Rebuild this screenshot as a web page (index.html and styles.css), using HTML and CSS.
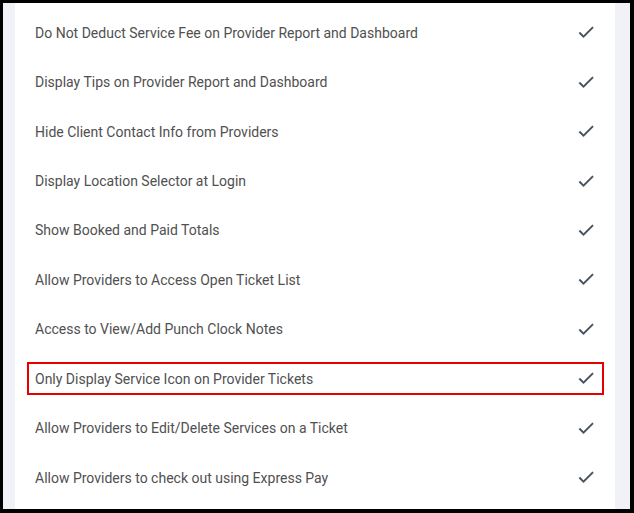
FILE: index.html
```html
<!DOCTYPE html>
<html lang="en">
<head>
    <meta charset="UTF-8">
    <meta name="viewport" content="width=device-width, initial-scale=1.0">
    <title>Provider Settings</title>
    <link rel="stylesheet" href="styles.css">
</head>
<body>
    <div class="frame">
        <div class="page">
            <ul class="settings">
                <li class="row"><div class="row-body"><span>Do Not Deduct Service Fee on Provider Report and Dashboard</span><svg class="check" viewBox="0 0 24 24"><path d="M9 16.17L4.83 12l-1.42 1.41L9 19 21 7l-1.41-1.41z"/></svg></div></li>
                <li class="row"><div class="row-body"><span>Display Tips on Provider Report and Dashboard</span><svg class="check" viewBox="0 0 24 24"><path d="M9 16.17L4.83 12l-1.42 1.41L9 19 21 7l-1.41-1.41z"/></svg></div></li>
                <li class="row"><div class="row-body"><span>Hide Client Contact Info from Providers</span><svg class="check" viewBox="0 0 24 24"><path d="M9 16.17L4.83 12l-1.42 1.41L9 19 21 7l-1.41-1.41z"/></svg></div></li>
                <li class="row"><div class="row-body"><span>Display Location Selector at Login</span><svg class="check" viewBox="0 0 24 24"><path d="M9 16.17L4.83 12l-1.42 1.41L9 19 21 7l-1.41-1.41z"/></svg></div></li>
                <li class="row"><div class="row-body"><span>Show Booked and Paid Totals</span><svg class="check" viewBox="0 0 24 24"><path d="M9 16.17L4.83 12l-1.42 1.41L9 19 21 7l-1.41-1.41z"/></svg></div></li>
                <li class="row"><div class="row-body"><span>Allow Providers to Access Open Ticket List</span><svg class="check" viewBox="0 0 24 24"><path d="M9 16.17L4.83 12l-1.42 1.41L9 19 21 7l-1.41-1.41z"/></svg></div></li>
                <li class="row"><div class="row-body"><span>Access to View/Add Punch Clock Notes</span><svg class="check" viewBox="0 0 24 24"><path d="M9 16.17L4.83 12l-1.42 1.41L9 19 21 7l-1.41-1.41z"/></svg></div></li>
                <li class="row marked"><div class="row-body"><span>Only Display Service Icon on Provider Tickets</span><svg class="check" viewBox="0 0 24 24"><path d="M9 16.17L4.83 12l-1.42 1.41L9 19 21 7l-1.41-1.41z"/></svg></div></li>
                <li class="row"><div class="row-body"><span>Allow Providers to Edit/Delete Services on a Ticket</span><svg class="check" viewBox="0 0 24 24"><path d="M9 16.17L4.83 12l-1.42 1.41L9 19 21 7l-1.41-1.41z"/></svg></div></li>
                <li class="row"><div class="row-body"><span>Allow Providers to check out using Express Pay</span><svg class="check" viewBox="0 0 24 24"><path d="M9 16.17L4.83 12l-1.42 1.41L9 19 21 7l-1.41-1.41z"/></svg></div></li>
            </ul>
        </div>
    </div>
</body>
</html>
```

FILE: styles.css
```css
* {
    margin: 0;
    padding: 0;
    box-sizing: border-box;
}

html, body {
    height: 100%;
}

body {
    background: #000;
    font-family: 'Roboto', 'Liberation Sans', sans-serif;
    overflow: hidden;
}

.frame {
    height: 100%;
    padding: 3px 4px 4px 3px;
}

.page {
    height: 100%;
    background: #f1f2f7;
    padding: 0 15px 0 12px;
    overflow: hidden;
}

.settings {
    list-style: none;
    background: #fff;
    height: 100%;
    padding-top: 5px;
}

.row {
    height: 49.44px;
    padding: 0 11px 0 12px;
    display: flex;
    align-items: center;
}

.row-body {
    flex: 1;
    height: 33px;
    border: 2px solid transparent;
    padding: 0 6px;
    display: flex;
    align-items: center;
    justify-content: space-between;
    font-size: 14px;
    color: #505050;
}

.row.marked .row-body {
    border-color: #e60000;
}

.check {
    width: 20px;
    height: 20px;
    fill: #3e4b58;
    stroke: #3e4b58;
    stroke-width: 0.4;
    margin-top: -1px;
}
```
